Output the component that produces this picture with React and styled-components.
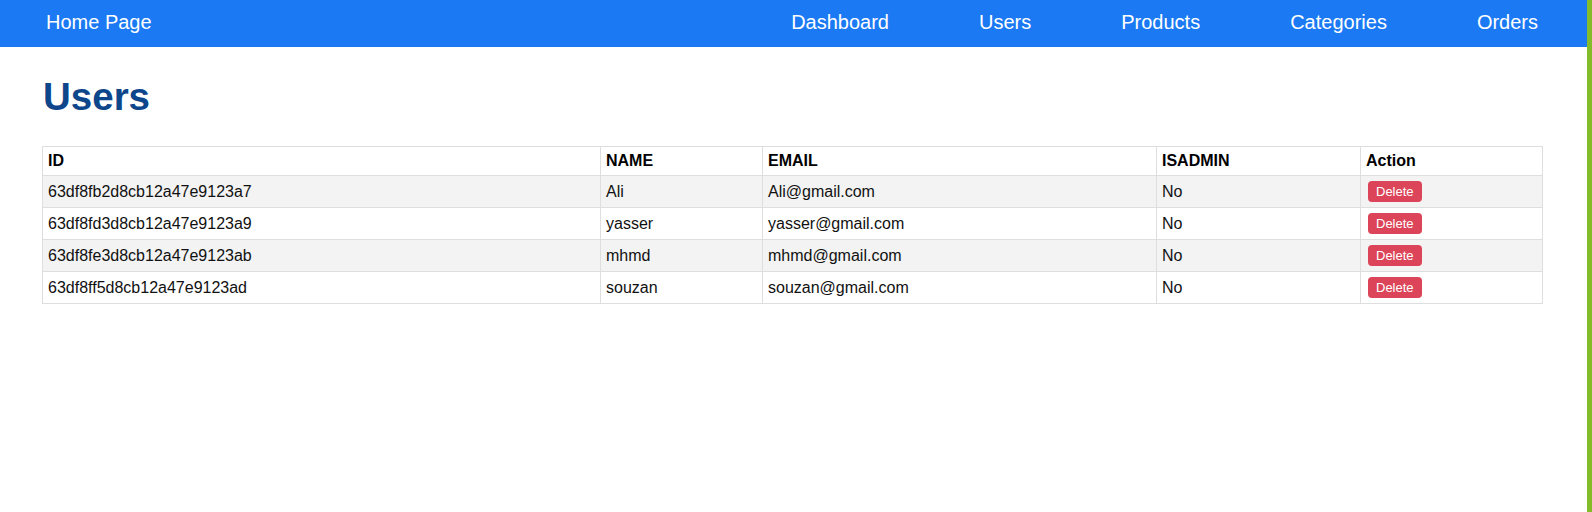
import React from 'react'
import styled, { createGlobalStyle } from 'styled-components'

const GlobalStyle = createGlobalStyle`
  html, body {
    margin: 0;
    padding: 0;
    background: #fff;
    font-family: "Liberation Sans", Arial, sans-serif;
  }
`

const Page = styled.div`
  display: flex;
  min-height: 512px;
`

const Main = styled.div`
  flex: 1;
  min-width: 0;
`

const Edge = styled.div`
  width: 5px;
  background: #84bb29;
  flex-shrink: 0;
`

const NavBar = styled.nav`
  box-sizing: border-box;
  height: 47px;
  background: #1a79f3;
  display: flex;
  align-items: center;
  justify-content: space-between;
  padding: 0 49px 3px 46px;
`

const NavLinks = styled.div`
  display: flex;
  gap: 90px;
`

const NavLink = styled.a`
  color: #fff;
  font-size: 20px;
  text-decoration: none;
  cursor: pointer;
`

const Content = styled.div`
  padding: 0 45px 0 42px;
`

const Title = styled.h1`
  margin: 28px 0 27px 1px;
  font-size: 38.5px;
  font-weight: 700;
  color: #0e468b;
`

const Table = styled.table`
  width: 1500px;
  border-collapse: collapse;
  table-layout: fixed;
  font-size: 16px;
  color: #111;
`

const Th = styled.th`
  box-sizing: border-box;
  width: ${p => p.w}px;
  text-align: left;
  font-weight: 700;
  color: #000;
  padding: 5px 5px;
  border: 1px solid #dedede;
`

const Row = styled.tr`
  background: ${p => (p.odd ? '#f3f3f3' : '#fff')};
`

const Td = styled.td`
  padding: 5px 5px;
  border: 1px solid #dedede;
  vertical-align: middle;
`

const DeleteButton = styled.button`
  margin-left: 2px;
  height: 21px;
  padding: 0 8px;
  border: none;
  border-radius: 4px;
  background: #dc4559;
  color: #fff;
  font-family: "Liberation Sans", Arial, sans-serif;
  font-size: 13px;
  line-height: 21px;
  display: block;
  cursor: pointer;
`

const users = [
  { id: '63df8fb2d8cb12a47e9123a7', name: 'Ali', email: 'Ali@gmail.com' },
  { id: '63df8fd3d8cb12a47e9123a9', name: 'yasser', email: 'yasser@gmail.com' },
  { id: '63df8fe3d8cb12a47e9123ab', name: 'mhmd', email: 'mhmd@gmail.com' },
  { id: '63df8ff5d8cb12a47e9123ad', name: 'souzan', email: 'souzan@gmail.com' },
]

const App = () => {
  return (
    <Page>
      <GlobalStyle />
      <Main>
        <NavBar>
          <NavLink>Home Page</NavLink>
          <NavLinks>
            <NavLink>Dashboard</NavLink>
            <NavLink>Users</NavLink>
            <NavLink>Products</NavLink>
            <NavLink>Categories</NavLink>
            <NavLink>Orders</NavLink>
          </NavLinks>
        </NavBar>
        <Content>
          <Title>Users</Title>
          <Table>
            <thead>
              <tr>
                <Th w={558}>ID</Th>
                <Th w={162}>NAME</Th>
                <Th w={394}>EMAIL</Th>
                <Th w={204}>ISADMIN</Th>
                <Th w={182}>Action</Th>
              </tr>
            </thead>
            <tbody>
              {users.map((u, i) => (
                <Row key={u.id} odd={i % 2 === 0}>
                  <Td>{u.id}</Td>
                  <Td>{u.name}</Td>
                  <Td>{u.email}</Td>
                  <Td>No</Td>
                  <Td>
                    <DeleteButton>Delete</DeleteButton>
                  </Td>
                </Row>
              ))}
            </tbody>
          </Table>
        </Content>
      </Main>
      <Edge />
    </Page>
  )
}

export default App
